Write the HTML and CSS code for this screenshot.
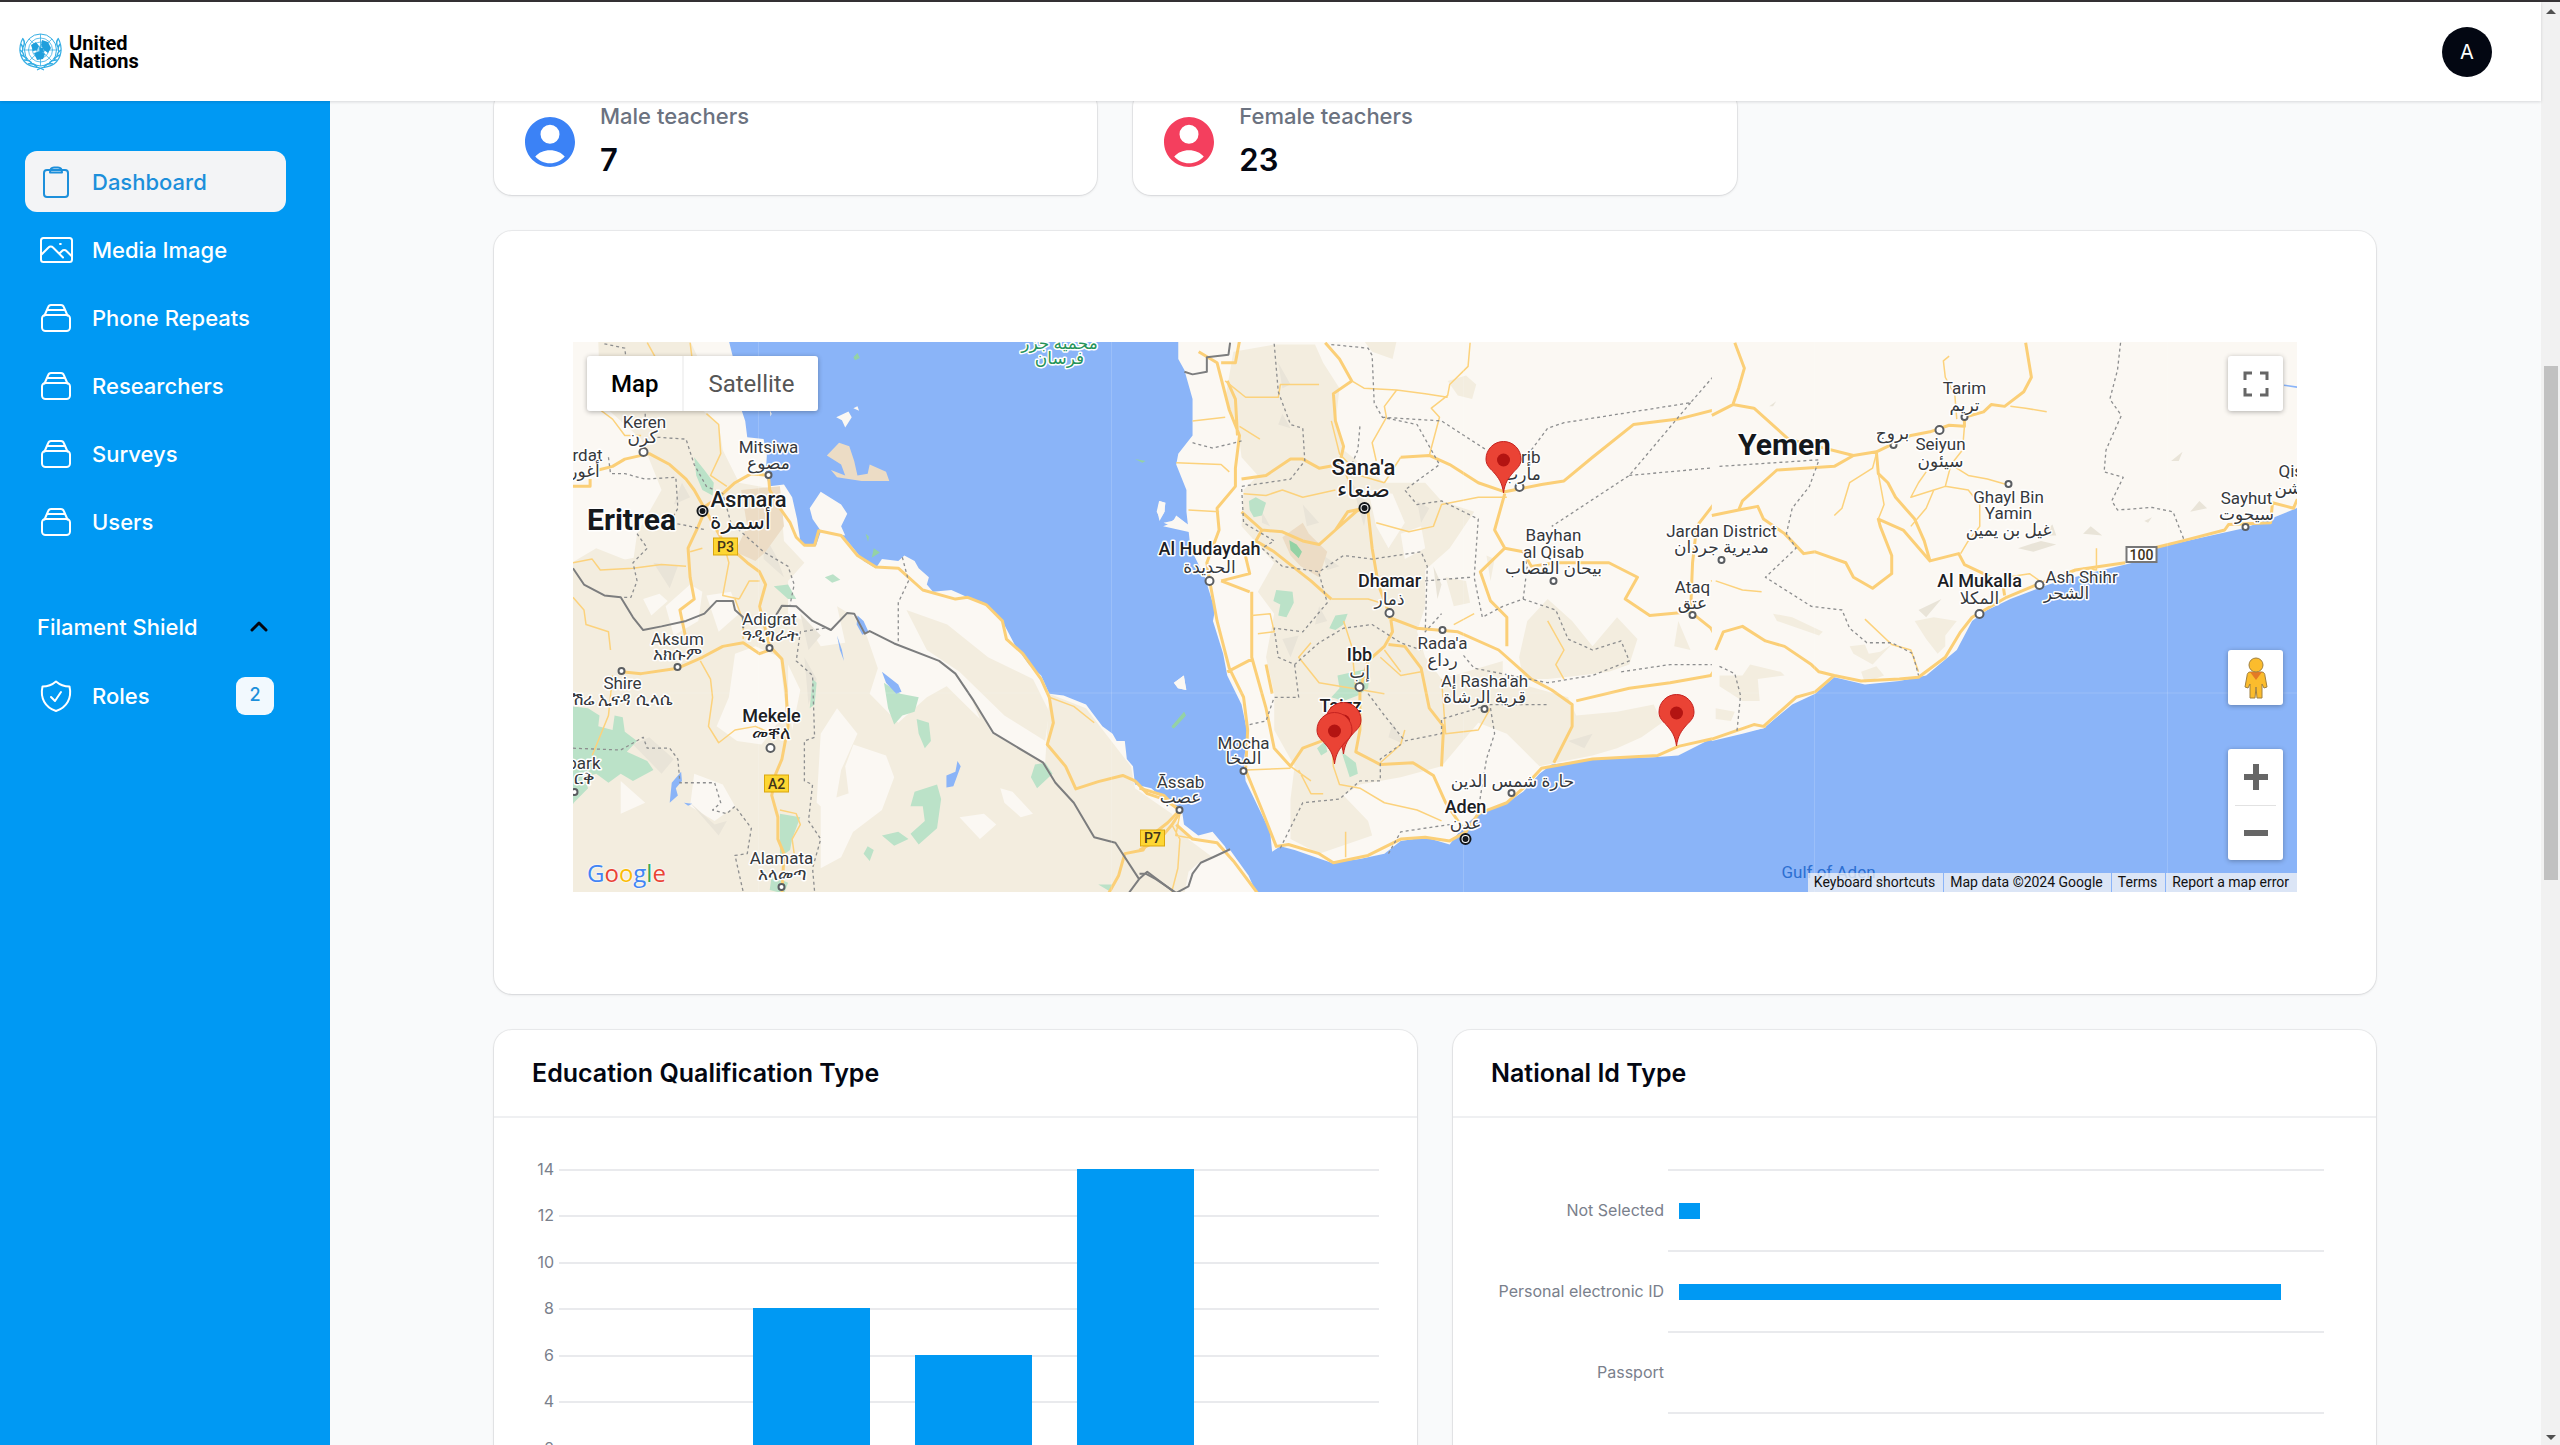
FILE: index.html
```html
<!DOCTYPE html>
<html lang="en">
<head>
<meta charset="utf-8">
<title>Dashboard</title>
<link rel="stylesheet" href="styles.css">
</head>
<body>
<div class="page">
  <div class="app">
    <header class="topbar">
      <a class="brand" href="#">
        <svg class="brand-mark" viewBox="0 0 45 38" aria-hidden="true">
          <g fill="none" stroke="#35aee4">
            <circle cx="22.500" cy="17" r="16" stroke-width="1"/>
            <circle cx="22.500" cy="17" r="12" stroke-width=".8"/>
            <circle cx="22.500" cy="17" r="8" stroke-width=".8"/>
            <circle cx="22.500" cy="17" r="4" stroke-width=".8"/>
            <path d="M22.500 1v32M6.500 17h32M11 6l23 22M34 6L11 28" stroke-width=".8"/>
            <path d="M5 5C0 14 1 25 9 31c4 3 9 3 13 4l4 2M40 5c5 9 4 20-4 26-4 3-9 3-13 4l-4 2" stroke-width="1.200"/>
            <path d="M5 6c2 3 2 5 0 8M3 11c2 3 3 5 1 8M2 17c3 2 4 4 4 7M3 22c3 1 6 3 6 6M6 27c4 0 7 1 8 4M10 31c4-1 7 0 9 3M40 6c-2 3-2 5 0 8M42 11c-2 3-3 5-1 8M43 17c-3 2-4 4-4 7M42 22c-3 1-6 3-6 6M39 27c-4 0-7 1-8 4M35 31c-4-1-7 0-9 3" stroke-width="1.500"/>
          </g>
          <path d="M13 12l5-3 3 4-2 4-4 1zM24 7l6 2 3 6-3 5-4-3-3-5zM16 20l6-2 5 3-2 5-6 1zM21 14l4 1 1 4-4 1z" fill="#1f9fdc"/>
        </svg>
        <span class="brand-name">United<br>Nations</span>
      </a>
      <button class="avatar" type="button" aria-label="User menu">A</button>
    </header>
    <div class="body">
      <nav class="sidebar">
        <ul class="nav">
          <li><a class="nav-item active" href="#"><svg class="icon" viewBox="0 0 36 36"><rect x="6" y="6" width="24" height="27" rx="3"/><path d="M12 8.500C12 5 14 3.500 16 3.500h4c2 0 4 1.500 4 5z"/></svg>Dashboard</a></li>
          <li><a class="nav-item" href="#"><svg class="icon" viewBox="0 0 36 36"><rect x="3" y="6" width="31" height="24" rx="2.500"/><path d="M3 23l7.500-7.500a3 3 0 0 1 4.500 0l10 10M22 21l2-2a3 3 0 0 1 4.500 0l5.500 5.500M22 12h.8"/></svg>Media Image</a></li>
          <li><a class="nav-item" href="#"><svg class="icon" viewBox="0 0 36 36"><rect x="4" y="15" width="28" height="16" rx="3.500"/><path d="M6.500 15.500l3.500-8C10.500 6 11.500 5 13 5h10c1.500 0 2.500 1 3 2.500l3.500 8M9 10h18"/></svg>Phone Repeats</a></li>
          <li><a class="nav-item" href="#"><svg class="icon" viewBox="0 0 36 36"><rect x="4" y="15" width="28" height="16" rx="3.500"/><path d="M6.500 15.500l3.500-8C10.500 6 11.500 5 13 5h10c1.500 0 2.500 1 3 2.500l3.500 8M9 10h18"/></svg>Researchers</a></li>
          <li><a class="nav-item" href="#"><svg class="icon" viewBox="0 0 36 36"><rect x="4" y="15" width="28" height="16" rx="3.500"/><path d="M6.500 15.500l3.500-8C10.500 6 11.500 5 13 5h10c1.500 0 2.500 1 3 2.500l3.500 8M9 10h18"/></svg>Surveys</a></li>
          <li><a class="nav-item" href="#"><svg class="icon" viewBox="0 0 36 36"><rect x="4" y="15" width="28" height="16" rx="3.500"/><path d="M6.500 15.500l3.500-8C10.500 6 11.500 5 13 5h10c1.500 0 2.500 1 3 2.500l3.500 8M9 10h18"/></svg>Users</a></li>
        </ul>
        <button class="nav-group" type="button">Filament Shield
          <svg class="chevron" viewBox="0 0 18 12"><path d="M2 9l7-7 7 7"/></svg>
        </button>
        <ul class="nav">
          <li><a class="nav-item" href="#"><svg class="icon" viewBox="0 0 36 36"><path d="M18 3.500C14 7 9.500 8.500 4.500 8.500 2 20 7 29.500 18 33c11-3.500 16-13 13.500-24.500-5 0-9.500-1.500-13.500-5zM13 19l4 4 6-9"/></svg>Roles<span class="badge">2</span></a></li>
        </ul>
      </nav>

      <main class="content">
        <section class="stats">
          <article class="card stat">
            <svg class="person male" viewBox="2 2 20 20"><path d="M12 2C6.500 2 2 6.500 2 12s4.500 10 10 10 10-4.500 10-10S17.500 2 12 2zm0 3.100a3.800 3.800 0 1 1 0 7.600 3.800 3.800 0 0 1 0-7.600zm0 15.400c-2.300 0-4.500-1-5.900-2.700 1.300-1.500 3.500-2.500 5.900-2.500s4.600 1 5.900 2.500c-1.400 1.700-3.600 2.700-5.900 2.700z"/></svg>
            <div><p class="stat-label">Male teachers</p><p class="stat-value">7</p></div>
          </article>
          <article class="card stat">
            <svg class="person female" viewBox="2 2 20 20"><path d="M12 2C6.500 2 2 6.500 2 12s4.500 10 10 10 10-4.500 10-10S17.500 2 12 2zm0 3.100a3.800 3.800 0 1 1 0 7.600 3.800 3.800 0 0 1 0-7.600zm0 15.400c-2.300 0-4.500-1-5.900-2.700 1.300-1.500 3.500-2.500 5.900-2.500s4.600 1 5.900 2.500c-1.400 1.700-3.600 2.700-5.900 2.700z"/></svg>
            <div><p class="stat-label">Female teachers</p><p class="stat-value">23</p></div>
          </article>
        </section>

        <section class="card map-card">
          <div class="map">
            <svg class="map-canvas" viewBox="0 0 1725 550" preserveAspectRatio="xMidYMid slice" role="img" aria-label="Map of Yemen and Eritrea">
              <rect width="1725" height="550" fill="#8ab4f8"/>
              <!-- Eritrea and Ethiopia -->
              <g class="tile" transform="translate(-13 -12) scale(.40816 .36364)">
                <path class="land" d="M30 30H415L425 75 440 200 455 250 460 295 500 300 508 345 505 400 515 430 550 425 570 460 582 520 590 580 605 595 628 595 640 555 690 560 720 600 745 635 775 655 790 630 830 635 845 620 870 635 880 655 905 680 900 700 915 720 960 715 1000 735 1040 750 1085 800 1115 865 1150 920 1180 950 1200 1000 1235 1005 1290 1030 1330 1090 1355 1110 1365 1130 1385 1130 1390 1180 1405 1200 1410 1250 1450 1260 1480 1290 1525 1320 1530 1360 1565 1390 1600 1380 1630 1420 1690 1550H30z"/>
                <path class="hill" d="M95 30H320L345 90 350 220 390 260 400 330 440 420 540 440 550 580 600 640 560 690 560 780 600 800 640 870 700 860 680 760 740 800 780 930 760 1000 830 1080 900 1010 980 960 1030 1050 1060 1110 1190 1190 1200 1000 1290 1040 1400 1200 1410 1260 1500 1330 1540 1400 1600 1450 1650 1550H30V640L90 600 180 640 190 560 250 440 200 300 100 200z"/>
                <path class="land" d="M40 60l30-10-10 90-20 50zM260 760l60-60 30 20-10 80-60 40zM205 740l40-15 20 20-40 40zM360 730l60-10 20 60-50 50zM430 890l50-20 60 30 15 150-60 90-60-10-50-40 30-80zM640 1110l40-70 50 70-40 100-20 130-40-40zM560 920l30 70-20 110-10-80zM810 760l100 20 60 130 60 160-90-100-90-60zM700 1200l20-60 80 30 20 60-30 90-70 60zM980 1340l60-10 30 30-40 40zM1080 1260l30 10 50 60-30 10-40-40zM640 1300l80-30 20 60-50 120-50 30zM150 1240l60 60-60 30zM330 1220l70 30 30 60-50 40-60-40z"/>
                <path class="hill" d="M850 770l100 40 100 90 110 60 40 90-10 80-100-70-110-120-80-60zM120 640l90-20 20 90-80 10z"/>
                <path class="shade" d="M100 100l30 60-20 20zM280 120l20 80-30-20zM230 640l60 10-20 60zM500 560l30 60 20 60-50-50zM590 780l50 60-30 40zM600 900l30 60-20 70zM180 1140l40-20 60 60-30 40zM320 1300l60 60 30-10-20 40zM300 420l20 40-40 20z"/>
                <path class="sand" d="M445 440L540 430 550 540 505 610 480 635 430 610 460 540zM655 345L685 310 710 320 722 360 730 400 755 395 760 370 800 390 808 415 740 415 680 405 665 385 700 400 690 370z"/>
                <path class="park" d="M330 350L355 385 378 420 375 455 350 440 335 400zM30 1035L70 1040 98 1060 95 1090 130 1100 135 1060 155 1065 160 1105 190 1130 165 1160 215 1185 230 1210 180 1240 150 1220 120 1245 90 1220 60 1230 70 1260 35 1300 30 1310zM525 705L560 700 580 740 560 740zM795 970L835 1000 880 1010 870 1050 840 1060 820 1085 805 1040zM875 1070L905 1080 910 1130 895 1150 880 1110zM870 1270L925 1250 935 1290 925 1370 880 1415 860 1385 895 1350 890 1310 860 1310zM790 1390L830 1380 855 1400 820 1418zM745 1440L755 1420 770 1430 760 1460zM620 960l10 10-5 60 -12 10zM1155 1230L1165 1195 1190 1190 1208 1220 1170 1260zM540 1330L590 1340 570 1400 565 1430 540 1450zM520 1500L560 1520 550 1550 515 1540zM1320 1525l40 0-10 20zM650 680l20-8 18 15-20 8z"/>
                <path class="green" d="M720 75l10-12 6 14-12 6zM750 560l8 8-2 14zM770 600l15 12-20 14zM1410 355l26 5-8 5zM1500 1090L1530 1050 1535 1060 1505 1095z"/>
                <path class="land" d="M613 490L640 445 690 480 705 505 690 540 700 565 640 552 620 520zM678 240l30-16 8 16-16 28-8-20zM720 215l10-5 4 12zM1465 500L1470 470 1485 475 1480 505 1470 525zM1480 530L1500 525 1515 515 1545 540 1560 555 1500 540zM1505 970L1530 950 1535 990 1515 985zM515 220l5 10-3 8z"/>
                <path class="water" d="M730 785L745 800 757 830 742 838 728 810zM680 840l12 40 5 30-10-30zM790 940L830 975 838 995 825 1000 800 970zM948 1225L970 1215 975 1185 983 1200 965 1255 948 1258zM275 1245L298 1215 300 1240 285 1260 290 1280 270 1300zM305 1300l20 3-10 5z"/>
                <path class="road wide" d="M95 385L130 375 160 355 220 340 270 370 310 410 330 440 360 500 400 580 460 640 490 665 505 700 490 760 515 870 545 905 555 990 560 1090 545 1180 530 1220 520 1280 535 1340 535 1400 550 1440 545 1550M355 500L340 540 315 600 320 680 330 740 295 770 310 850M350 490L390 460 430 420 470 395 512 400 515 440 540 490 565 530 580 570 600 592 625 592 635 552 690 565 730 620 775 652 830 655 890 715 970 740 1000 735 1045 755 1085 800 1095 850 1135 890 1180 960 1200 1010 1210 1080 1195 1140 1240 1200 1265 1262 1320 1242 1380 1225 1410 1240 1440 1275 1480 1290 1520 1320 1490 1355 1450 1390 1430 1430 1385 1440 1370 1500 1345 1550M33 430L75 430 75 410"/>
                <path class="road wide" d="M152 940L200 945 290 930 350 900 400 870 450 860 490 890 515 880"/>
                <path class="road" d="M215 35L235 75M320 35L325 80M100 220L130 245 160 290 200 290M360 230L390 260 395 340 370 400 410 430M33 640L80 630 100 660 180 655 250 645 310 650M33 735L60 770 65 810 120 830 125 880M350 600L320 610M400 580L415 640 400 730 440 740M440 740L465 690 490 690M430 740L450 800 450 850M345 910L370 960 375 1010 365 1090 390 1135 430 1100 480 1090 520 1110M130 950L120 1060 80 1170M540 1320L580 1330 590 1360 570 1400 575 1440M1200 1010L1260 1035 1310 1080M1500 1360L1520 1400 1515 1480 1500 1545M1520 1330L1510 1390 1560 1400"/>
                <path class="border" d="M33 655L60 700 110 730 150 735 180 790 205 825 250 815 310 800 355 780 385 745 425 745 430 770 450 790 450 820M530 785L545 758 580 760 620 800 665 825 705 778 722 780 748 835 760 828 820 862 930 910 970 945 1015 1020 1063 1108 1185 1190 1215 1245 1260 1300 1310 1395 1362 1410 1420 1510 1440 1490 1505 1545M1395 1548L1420 1510"/>
                <path class="dash" d="M110 38L160 50 165 100M210 230V260M240 295L310 300 330 370 360 430 400 450 420 530 460 570 500 610 560 650 575 700 565 755M120 350L125 395 160 395 210 410 285 405 290 490 270 530 300 535 360 550M190 560L215 600 180 640 190 690 175 735 150 735M840 625L855 690 830 750 830 860M650 820L590 830 580 910 620 950 625 1120 600 1130 600 1240 620 1250 610 1350 640 1400 620 1480 625 1545M33 1150L150 1155 205 1120 215 1150 270 1150 290 1180 295 1245 380 1245 395 1300 375 1320 410 1330 430 1310 470 1370 460 1440 430 1445 450 1545"/>
              </g>
              <!-- Yemen west -->
              <g class="tile" transform="translate(567 -12) scale(.40816 .36364)">
                <path class="land" d="M95 30H1570V1055L1530 1095 1480 1105 1390 1130 1320 1170 1260 1175 1120 1180 1010 1195 980 1220 940 1270 900 1300 830 1330 790 1370 760 1415 700 1395 640 1405 600 1440 540 1455 470 1465 380 1430 345 1420 325 1435 320 1380 260 1240 255 1190 265 1110 250 1030 215 950 205 890 180 800 185 770 160 680 125 600 115 500 115 440 90 370 95 340 130 290 130 190 110 110 95 80z"/>
                <path class="hill" d="M230 60L330 40H430L450 90 490 160 480 260 500 330 600 420 700 420 740 470 820 500 760 600 700 660 700 760 680 830 700 900 740 960 830 930 890 910 890 960 1050 1010 1070 1060 1170 1050 1260 1030 1280 1080 1230 1120 1170 1150 1110 1170 1020 1190 980 1200 900 1110 830 1080 740 1200 640 1230 540 1250 500 1280 560 1350 570 1390 440 1440 370 1400 370 1290 380 1200 330 1100 330 1000 310 900 330 780 290 720 330 640 250 540 255 440 290 400 250 350 240 260 210 190z"/>
                <path class="hill" d="M550 30H630L620 80 570 60zM755 140L800 125 825 150 815 190 780 180zM1000 740L1060 800 1110 870 1170 790 1220 850 1200 920 1150 940 1080 950 1000 960 940 960 930 900 950 800zM1320 800L1350 880 1310 870zM850 620l20 10-10 60zM750 680l50 10 10 60-40 10z"/>
                <path class="shade" d="M340 90l30 60-20 10zM350 230l20 40-30-10zM300 500l20 40-20-10zM400 480l40 50-30 10zM450 620l40 30-30 10zM350 850l40-10-20 60zM440 760l20 40-30 10zM680 470l30 20-20 40zM620 1080l30 60-40-20zM520 420l40 60-10 60zM720 650l20 50-10 40zM1050 1130l60-20-20 40z"/>
                <path class="land" d="M560 440l60 10 30 80-40 70-30-60zM640 560l50-20 10 60-50 30zM700 800l60 60-50 60z"/>
                <path class="sand" d="M350 570L400 530 415 560 460 610 440 680 395 650 370 620z"/>
                <path class="park" d="M268 470L285 460 310 475 300 510 280 515 270 495zM335 715L375 720 378 750 360 790 340 785 345 755 328 745zM465 820L480 785 510 780 500 810 480 825zM485 950L565 930 560 985 535 1005 500 1020 470 1010 490 985zM435 1150L455 1130 460 1160 445 1170zM495 1160L530 1190 535 1220 515 1230z"/>
                <path class="green" d="M367 578L385 590 398 610 390 628 370 605zM78 1092L110 1052 112 1062 84 1096z"/>
                <path class="land" d="M42 500L48 470 62 475 62 500 50 518zM58 540L80 530 90 510 130 545 132 558 80 545zM85 970L108 950 115 990 95 985z"/>
                <path class="land" d="M150 1460l72-30 45 70 20 50H110l10-60z"/>
                <path class="road wide" d="M145 60L190 90 220 220 245 290 235 380 235 430 190 490 195 550 165 640 172 690 190 800 220 930 255 1010 265 1100 260 1210 300 1320 335 1420 365 1415 440 1440 475 1465 560 1445 640 1400 700 1395 760 1405 800 1380 830 1330 900 1300 940 1260 985 1205 1110 1180 1270 1170 1320 1145 1420 1120 1490 1090 1535 1090M455 35L490 80 520 140 475 175 480 250 500 320 490 370 440 380 400 355 370 355 310 400 250 410M240 290L235 190 215 140M245 30L235 90 200 90M550 490L510 500 480 550 440 590 400 580 350 555 300 550 285 580 330 610 420 690 470 740M300 550L250 500M560 500L570 600 585 700 615 790 620 830 600 870 560 910 540 990 540 1100 530 1160 590 1195 670 1190 720 1225 750 1300 780 1350 800 1380M480 550L530 500 560 480M610 790L680 820 780 830 880 880 960 960 1010 990 1060 1030 1060 1090 1015 1190M640 350L710 345 760 370 830 420 895 445 985 425 1040 415 1110 350 1210 260 1320 245 1460 205 1570 285M895 450L870 550 895 600 835 665 860 745 900 790 900 870M895 600L940 610 960 650 1020 640 1150 640 1220 680 1190 740 1250 785 1350 775 1400 820 1420 860 1430 900 1400 950 1300 970 1200 985 1070 1020M1350 780L1355 640 1365 540 1410 475 1430 510 1480 490 1530 500 1570 560M1480 490L1500 440 1570 385M1460 30L1480 105 1460 205M1420 850L1470 815 1530 860 1570 855M610 865L650 870 690 930 710 1040 745 1090 740 1200M275 720L275 900 310 1040 330 1150 370 1200 400 1150 470 1120M200 690L270 720M200 690L270 670 255 600M215 940L275 905M310 920L325 1000"/>
                <path class="road" d="M810 35L805 100 760 150 755 180 715 215 735 240 710 345M520 140L550 160 630 165 700 175 755 185M630 165L600 210 605 240 570 310 580 360M210 140L260 185 340 185 345 150 440 150M130 250L210 240M245 265L295 300M90 365L200 370 220 390M255 450L310 455 350 440 400 460 480 440M120 495L195 500M275 785L320 780 330 830 290 835M470 740L560 740 590 750M500 800L520 870 530 990M420 860L390 900 440 970 600 1000M590 900L640 950 690 940M600 880L640 940M740 960L750 1110 830 1100 860 1040M470 1120L475 1200 490 1250 540 1260 600 1300 680 1320 740 1350M390 1210L420 1275 450 1275M370 1200L420 1240M260 1210L370 1205M505 1380V1450M590 1190L640 1140 650 1100M900 460L830 460 740 480 720 540 660 555 580 530M1400 690L1430 685 1470 710 1520 715M1000 800L1040 880 1020 920 1040 960M820 780L770 810M470 250L490 340 540 400 600 420M600 420L640 350M500 380L520 440"/>
                <path class="road wide" d="M0 1260L60 1280 100 1325 80 1360 50 1400 0 1430M90 1360L130 1400 190 1410 230 1460 290 1550"/>
                <path class="border" d="M110 115L130 122 165 115 165 75 218 68 222 35M0 1495L15 1495 40 1510 90 1548 120 1530 130 1495 150 1465 180 1450 222 1428"/>
                <path class="dash" d="M330 38L340 170 370 260 400 270 405 360 370 410 250 430 255 530 330 580 300 600 350 650 440 665 500 620 570 630 690 610 705 650 700 830 740 780M130 310L180 325 250 305M470 40L560 50 570 70 575 200 595 240 680 260 735 370 650 440 680 480 740 470 830 520 820 680 840 790 890 760 940 740 950 650 940 610M595 240L740 250 850 330M540 265L535 330 520 370M960 330L1000 270 1040 255 1350 200 1408 125V35M1350 200L1200 400 1010 540M1200 400L1570 362M700 690L810 680M440 670L460 750 400 830 330 820 340 900 380 920 440 860 500 820 570 810 640 860 690 880M380 920L390 1010 330 1010M270 1085L310 1075 330 1010M560 1000L600 1060 650 1130 740 1110 740 1070 860 1030 1000 1030M345 1425L400 1300 490 1290 540 1240 590 1240 590 1180 640 1140M610 1440L640 1380 760 1360M860 1040L870 1110 850 1180 830 1320M940 740L1020 770 1050 850 1110 880 1180 855 1200 910 1110 950 1000 970 820 930 790 890M1180 940L1300 920 1420 920 1470 980 1465 1110M1570 690L1540 680 1570 640"/>
              </g>
              <!-- Yemen east -->
              <g class="tile" transform="translate(1147 -12) scale(.38270 .36364)">
                <path class="land" d="M-20 30H1520V485L1450 515 1370 545 1220 580 1140 600 1080 640 960 670 860 700 760 740 700 770 660 800 620 880 580 915 540 950 470 965 380 975 300 955 250 1000 190 1030 115 1095 60 1110-20 1130z"/>
                <path class="hill" d="M510 800L560 790 620 800 590 840 590 870 570 890 540 850zM140 780L190 790 270 830 260 840 150 800zM340 870L380 865 390 890 420 885 450 865 400 920 350 890zM370 940L410 925 430 950 380 970zM80 920L160 940 170 950 100 960 105 1020 60 1020 0 980 0 950 60 950zM-10 1040L40 1050 30 1075-10 1070z"/>
                <path class="shade" d="M1180 360l30-25-10 25zM780 600l60-20 40 10-60 20zM840 565l30-30 10 30zM1110 525l20-10-10 15zM520 770l60-30-40 50zM130 210l18-14-8 14zM1230 500l24-30 20 20zM950 560l20-20 30 25z"/>
                <path class="road wide" d="M40 35L65 105 50 160 35 205 -20 235M35 205L90 215 180 300 350 345 410 335 460 310 500 290 550 280 600 262 640 265 640 240 690 225 710 205 745 210 795 170 815 130 800 35M350 345L300 375 150 385 60 470 50 495-20 510M50 495L100 485 115 520 170 560 220 615 250 610 330 640 350 680 400 710 450 670 450 620 420 540 415 520 480 550 550 635 625 615 640 645 740 695 745 730M410 335L415 395 440 420 460 460 510 520 535 580 550 635M-10 880L10 830 60 815 120 855 170 870 240 920 260 940 300 950 370 965 470 960 520 955 590 900 630 830 660 790 750 735 830 700 930 660 1060 640M300 950L250 995 200 1010 115 1090 90 1085-20 1125M1140 598L1210 580 1320 550 1330 535 1440 530 1445 475 1500 490 1510 465"/>
                <path class="road" d="M600 72L585 85 590 130 615 180 620 245M760 210L800 215 855 225M640 265L635 330 605 370 650 400 700 410 750 425M605 370L590 430 650 440 680 480 680 540 650 580 630 615M590 430L560 440 540 490 500 540M560 440L500 460 520 420 540 390M410 340L400 380 340 420 320 490 300 510M415 395L430 480 415 520M380 795L450 865 500 880 520 940M985 600V660L950 655M750 680L810 670 850 700M-10 690L60 715 110 720"/>
                <path class="dash" d="M1048 35L1040 110 1020 190 1050 235 1010 330 1005 390 1055 405 1025 470 1040 495 1130 488 1185 500 1215 580M0 375L260 357 235 430 190 490 175 560 200 600 120 680 180 720 240 760 320 770 340 820 385 860 450 860 505 890 520 950M0 925L40 945 55 1005 45 1110"/>
                <path d="M1475 152L1515 158" fill="none" stroke="#8ab4f8" stroke-width="1.500"/>
              </g>
              <path d="M186 0V550M539 0V550M891 0V550M1242 0V550M1595 0V550M0 351H1725" stroke="#fff" stroke-opacity=".15"/>
              <g class="town">
                <circle cx="71" cy="110" r="4"/><circle cx="196" cy="133" r="3"/><circle cx="197" cy="306" r="3"/><circle cx="105" cy="325" r="3"/><circle cx="49" cy="329" r="3"/><circle cx="198" cy="406" r="4"/><circle cx="2" cy="450" r="3"/><circle cx="209" cy="545" r="3"/><circle cx="607" cy="468" r="3"/><circle cx="637" cy="239" r="4"/><circle cx="947" cy="145" r="4"/><circle cx="981" cy="239" r="3"/><circle cx="1149" cy="218" r="3"/><circle cx="1120" cy="273" r="3"/><circle cx="817" cy="271" r="4"/><circle cx="787" cy="345" r="4"/><circle cx="870" cy="288" r="3"/><circle cx="912" cy="367" r="3"/><circle cx="671" cy="429" r="3"/><circle cx="939" cy="451" r="3"/><circle cx="1392" cy="75" r="3"/><circle cx="1321" cy="103" r="3"/><circle cx="1367" cy="88" r="4"/><circle cx="1436" cy="142" r="3"/><circle cx="1673" cy="185" r="3"/><circle cx="1407" cy="272" r="4"/><circle cx="1467" cy="243" r="4"/>
              </g>
              <g class="capital"><circle cx="130" cy="169" r="5"/><circle cx="792" cy="166" r="5"/><circle cx="893" cy="497" r="5"/></g>
              <g fill="#14181c"><circle cx="130" cy="169" r="3"/><circle cx="792" cy="166" r="3"/><circle cx="893" cy="497" r="3"/></g>
              <g class="shield"><rect x="141" y="196" width="24" height="17"/><rect x="192" y="433" width="24" height="17"/><rect x="568" y="488" width="24" height="16"/></g>
              <rect x="1554" y="205" width="30" height="15" fill="#fff" stroke="#777" stroke-width="2"/>
              <g class="shield-text"><text x="153" y="210">P3</text><text x="204" y="447">A2</text><text x="580" y="501">P7</text><text x="1569" y="218">100</text></g>

              <g class="label">
                <text class="reserve" x="487" y="7">محمية جزر</text><text class="reserve" x="487" y="22">فرسان</text>
                <text x="72" y="86">Keren</text><text x="70" y="101">كرن</text>
                <text class="start" x="0" y="119">rdat</text><text x="12" y="135">أغور</text>
                <text x="196" y="111">Mitsiwa</text><text x="196" y="127">مصوع</text>
                <text class="capital-name start" x="138" y="165">Asmara</text><text class="capital-name local" x="168" y="187">أسمرة</text>
                <text x="197" y="283">Adigrat</text><text x="197" y="299">ዓዲግራት</text>
                <text x="105" y="303">Aksum</text><text x="105" y="318">አክሱም</text>
                <text x="50" y="347">Shire</text><text x="50" y="363">ሽሬ ኢናዳ ሲላሴ</text>
                <text class="city" x="199" y="380">Mekele</text><text class="city" x="199" y="397">መቐለ</text>
                <text class="end" x="28" y="427">park</text><text class="end" x="21" y="442">ርቅ</text>
                <text x="209" y="522">Alamata</text><text x="209" y="538">አላመጣ</text>
                <text x="608" y="446">Āssab</text><text x="608" y="461">عصب</text>
                <text class="city" x="637" y="213">Al Hudaydah</text><text x="637" y="231">الحديدة</text>
                <text class="capital-name" x="791" y="133">Sana'a</text><text class="capital-name local" x="791" y="155">صنعاء</text>
                <text class="end" x="968" y="121">Marib</text><text x="949" y="138">مأرب</text>
                <text x="981" y="199">Bayhan</text><text x="981" y="216">al Qisab</text><text x="981" y="232">بيحان القصاب</text>
                <text x="1149" y="195">Jardan District</text><text x="1149" y="211">مديرية جردان</text>
                <text x="1120" y="251">Ataq</text><text x="1120" y="267">عتق</text>
                <text class="city" x="817" y="245">Dhamar</text><text x="817" y="263">ذمار</text>
                <text class="city" x="787" y="319">Ibb</text><text x="787" y="336">إب</text>
                <text x="870" y="307">Rada'a</text><text x="870" y="324">رداع</text>
                <text x="912" y="345">Al Rasha'ah</text><text x="912" y="361">قرية الرشأة</text>
                <text class="city" x="768" y="370">Taizz</text>
                <text x="671" y="407">Mocha</text><text x="671" y="422">المخا</text>
                <text x="940" y="445">حارة شمس الدين</text>
                <text class="city" x="893" y="471">Aden</text><text x="893" y="487">عدن</text>
                <text x="1392" y="52">Tarim</text><text x="1392" y="69">تريم</text>
                <text x="1320" y="97">بروج</text>
                <text x="1368" y="108">Seiyun</text><text x="1368" y="125">سيئون</text>
                <text x="1436" y="161">Ghayl Bin</text><text x="1436" y="177">Yamin</text><text x="1436" y="194">غيل بن يمين</text>
                <text class="start" x="1706" y="135">Qishn</text><text x="1720" y="152">قشن</text>
                <text x="1674" y="162">Sayhut</text><text x="1674" y="178">سيحوت</text>
                <text class="city" x="1407" y="245">Al Mukalla</text><text x="1407" y="262">المكلا</text>
                <text class="start" x="1473" y="241">Ash Shihr</text><text x="1494" y="257">الشحر</text>
                <text class="country" x="59" y="188">Eritrea</text><text class="country" x="1212" y="113">Yemen</text>
                <text class="sea" x="1256" y="536">Gulf of Aden</text>
              </g>
              <defs><g id="pin"><path d="M0 0C-1.500-11-5-15-10-21-14-25-17.500-28-17.500-34a17.500 17.500 0 0 1 35 0C17.500-28 14-25 10-21 5-15 1.500-11 0 0z" fill="#ea4335" stroke="#c5221f"/><circle cy="-33" r="6.500" fill="#b31412"/></g></defs>
              <use href="#pin" x="931" y="151"/><use href="#pin" x="771" y="412"/><use href="#pin" x="762" y="422"/><use href="#pin" x="1104" y="404"/>
            </svg>
            <div class="map-type"><button type="button" class="selected">Map</button><button type="button">Satellite</button></div>
            <div class="map-tools">
              <button type="button" class="tool" aria-label="Toggle fullscreen view"><svg viewBox="0 0 26 26" width="26" height="26"><path d="M2 9V2h7M17 2h7v7M24 17v7h-7M9 24H2v-7" fill="none" stroke="#666" stroke-width="3"/></svg></button>
              <button type="button" class="tool pegman" aria-label="Street View"><svg viewBox="0 0 24 42" width="24" height="42"><path d="M6 15h12c2 0 3 2 3 4l2 11-3 1-2-4v14h-5l-1-11-1 11H6V27l-2 4-3-1 2-11c0-2 1-4 3-4z" fill="#fbbc2d" stroke="#a08040"/><path d="M6 15h12l-6 8z" fill="#e37a26"/><circle cx="12" cy="8" r="7" fill="#fbbc2d" stroke="#a08040"/></svg></button>
              <div class="zoom">
                <button type="button" aria-label="Zoom in"><svg viewBox="0 0 24 26" width="24" height="26"><path d="M0 13h24M12 0v26" stroke="#666" stroke-width="6"/></svg></button>
                <button type="button" aria-label="Zoom out"><svg viewBox="0 0 24 26" width="24" height="26"><path d="M0 13h24" stroke="#666" stroke-width="6"/></svg></button>
              </div>
            </div>
            <a class="google" href="#" aria-label="Google"><span class="g-blue">G</span><span class="g-red">o</span><span class="g-yellow">o</span><span class="g-blue">g</span><span class="g-green">l</span><span class="g-red">e</span></a>
            <div class="credits"><button type="button">Keyboard shortcuts</button><span>Map data ©2024 Google</span><a href="#">Terms</a><a href="#">Report a map error</a></div>
          </div>
        </section>

        <section class="charts">
          <article class="card">
            <h2 class="card-title">Education Qualification Type</h2>
            <div class="column-chart">
              <ol class="ticks"><li>14</li><li>12</li><li>10</li><li>8</li><li>6</li><li>4</li><li>2</li></ol>
              <div class="grid-lines"><i></i><i></i><i></i><i></i><i></i><i></i><i></i></div>
              <div class="columns"><b style="height:0%"></b><b style="height:57.140%"></b><b style="height:42.860%"></b><b style="height:100%"></b><b style="height:0%"></b></div>
            </div>
          </article>
          <article class="card">
            <h2 class="card-title">National Id Type</h2>
            <div class="bar-chart">
              <div class="bar-row"><span>Not Selected</span><div class="track"><b style="width:3.330%"></b></div></div>
              <div class="bar-row"><span>Personal electronic ID</span><div class="track"><b style="width:93.330%"></b></div></div>
              <div class="bar-row"><span>Passport</span><div class="track"></div></div>
              <div class="bar-row"><span></span><div class="track"></div></div>
            </div>
          </article>
        </section>
      </main>
    </div>
  </div>
  <div class="scrollbar" aria-hidden="true"><i class="arrow up"></i><i class="thumb"></i><i class="arrow down"></i></div>
</div>
</body>
</html>
```
FILE: styles.css
```css
* { box-sizing: border-box; }
body { margin: 0; font-family: Inter, "Noto Sans", sans-serif; color: #030712; background: #f9fafb; overflow: hidden; }
ul, ol, p, h2 { margin: 0; padding: 0; list-style: none; }
button { font: inherit; color: inherit; border: 0; padding: 0; background: none; cursor: pointer; }
a { color: inherit; text-decoration: none; }

.page { display: flex; height: 100vh; border-top: 2px solid #353235; }
.app { flex: 1; min-width: 0; display: flex; flex-direction: column; }

.topbar { position: relative; z-index: 2; flex: none; height: 99px; padding: 0 49px 0 18px; display: flex; align-items: center; justify-content: space-between; background: #fff; box-shadow: 0 1px 3px rgba(3, 7, 18, .14); }
.brand { display: flex; align-items: center; gap: 6px; }
.brand-mark { width: 45px; height: 38px; }
.brand-name { font: bold 20px/18px Roboto, sans-serif; color: #000; }
.avatar { width: 50px; height: 50px; border-radius: 50%; background: #030712; color: #fff; font-size: 20px; }

.body { flex: 1; min-height: 0; display: flex; }
.sidebar { flex: none; width: 330px; padding: 50px 44px 0 25px; background: #0099f3; color: #fff; font-size: 22px; font-weight: 500; }
.nav { display: flex; flex-direction: column; gap: 7px; }
.nav-item { display: flex; align-items: center; height: 61px; padding: 0 12px 0 13px; gap: 18px; border-radius: 12px; }
.nav-item.active { background: #f3f4f6; color: #1c8fdb; }
.icon { flex: none; width: 36px; height: 36px; fill: none; stroke: currentColor; stroke-width: 2; stroke-linecap: round; stroke-linejoin: round; }
.badge { margin-left: auto; width: 38px; height: 38px; border-radius: 9px; background: #f2f9fe; color: #1c8fdb; font-size: 18px; line-height: 36px; text-align: center; }
.nav-group { display: flex; align-items: center; justify-content: space-between; width: 100%; height: 36px; margin: 57px 0 20px; padding: 0 18px 0 12px; }
.chevron { width: 18px; height: 12px; fill: none; stroke: #030712; stroke-width: 3; stroke-linecap: round; stroke-linejoin: round; }

.content { flex: 1; min-width: 0; padding: 0 165px 0 164px; overflow: hidden; }
.card { background: #fff; border-radius: 18px; box-shadow: 0 0 0 1px rgba(3, 7, 18, .06), 0 1px 3px rgba(3, 7, 18, .1); }
.stats { display: grid; grid-template-columns: repeat(3, 1fr); gap: 36px; margin-top: -12px; }
.stat { display: flex; align-items: center; gap: 25px; padding: 9px 31px; }
.person { width: 50px; height: 50px; }
.male { fill: #3b82f6; }
.female { fill: #f43f5e; }
.stat-label { font-size: 22px; line-height: 36px; font-weight: 500; color: #6b7280; }
.stat-value { font-size: 31px; line-height: 52px; font-weight: 600; }

.map-card { margin: 36px 0; padding: 111px 79px 102px 79px; }
.map { position: relative; height: 550px; overflow: hidden; font-family: Roboto, "DejaVu Sans", sans-serif; }
.map-canvas { display: block; width: 100%; height: 100%; }
.tile path { vector-effect: non-scaling-stroke; stroke-linejoin: round; }
.land { fill: #fbf8f3; }
.hill { fill: #f3eddf; }
.shade { fill: #e9e4d8; }
.sand { fill: #ecdcc5; }
.park { fill: #bbe2c8; }
.green { fill: #94d2a5; }
.water { fill: #8ab4f8; }
.road { fill: none; stroke: #fcd27c; stroke-width: 1.5; }
.road.wide { stroke: #fbcf77; stroke-width: 3; }
.border { fill: none; stroke: #7c7d7e; stroke-width: 2; }
.dash { fill: none; stroke: #8d8e8f; stroke-width: 1.3; stroke-dasharray: 3 3; }
.town { fill: #fff; stroke: #5a5d61; stroke-width: 2; }
.capital { fill: #fff; stroke: #14181c; stroke-width: 2; }
.shield { fill: #fdd633; stroke: #dba70e; }
.shield-text { font-size: 14px; font-weight: 500; text-anchor: middle; fill: #40341a; }
.label { font-size: 17px; text-anchor: middle; fill: #35383c; stroke: #fff; stroke-width: 3; stroke-linejoin: round; paint-order: stroke; }
.label .start { text-anchor: start; }
.label .end { text-anchor: end; }
.label .city { font-size: 18px; font-weight: 500; fill: #1c2024; }
.label .capital-name { font-size: 22px; font-weight: 500; fill: #1c2024; }
.label .local { font-weight: 400; }
.label .country { font-size: 30px; font-weight: 700; fill: #14181c; }
.label .reserve { fill: #25935a; }
.label .sea { fill: #2c6fd1; stroke: none; }

.map-type { position: absolute; left: 14px; top: 14px; display: flex; background: #fff; border-radius: 3px; box-shadow: 0 1px 5px rgba(0, 0, 0, .3); font-size: 24px; color: #565656; }
.map-type button { height: 55px; padding: 0 24px; }
.map-type .selected { color: #000; font-weight: 500; border-right: 2px solid #f3f3f3; }
.map-tools { position: absolute; right: 14px; top: 14px; width: 55px; display: flex; flex-direction: column; }
.tool, .zoom { background: #fff; border-radius: 3px; box-shadow: 0 1px 5px rgba(0, 0, 0, .3); }
.tool { height: 55px; display: grid; place-items: center; }
.pegman { margin: 239px 0 44px; }
.zoom { height: 111px; padding: 0 7px; display: grid; grid-template-rows: 1fr 1fr; }
.zoom button { display: grid; place-items: center; }
.zoom button + button { border-top: 1px solid #e2e2e2; }
.google { position: absolute; left: 14px; bottom: 2px; font: 500 24px/34px "Open Sans", sans-serif; text-shadow: 0 0 2px #fff, 0 0 2px #fff; }
.g-blue { color: #4285f4; }
.g-red { color: #ea4335; }
.g-yellow { color: #fbbc04; }
.g-green { color: #34a853; }
.credits { position: absolute; right: 0; bottom: 0; display: flex; gap: 1px; font-size: 14px; line-height: 19px; color: #111; }
.credits > * { padding: 0 8px 0 6px; background: rgba(245, 245, 245, .75); }

.charts { display: grid; grid-template-columns: 1fr 1fr; gap: 36px; }
.card-title { padding: 25px 38px 25px; border-bottom: 2px solid #eff0f2; font-size: 25px; line-height: 36px; font-weight: 600; }
.column-chart { display: grid; grid-template-columns: 22px 1fr; gap: 0 5px; height: 429px; padding: 51px 38px; font-size: 16px; color: #7a808c; }
.ticks, .grid-lines { display: grid; grid-template-rows: repeat(7, 1fr); height: 325px; }
.ticks { text-align: right; line-height: 20px; margin-top: -10px; }
.grid-lines { grid-area: 1 / 2; }
.grid-lines i { border-top: 2px solid #e9eaed; }
.columns { grid-area: 1 / 2; height: 325px; margin-left: 9px; display: grid; grid-template-columns: repeat(5, 1fr); align-items: end; justify-items: center; }
.columns b { width: 72%; background: #0099f3; }
.bar-chart { padding: 51px 52px 52px 38px; font-size: 16px; color: #7a808c; }
.bar-row { display: grid; grid-template-columns: 173px 1fr; gap: 4px; height: 81px; align-items: center; text-align: right; }
.track { height: 100%; border-top: 2px solid #e9eaed; padding-left: 11px; display: flex; align-items: center; }
.track b { height: 16px; background: #0099f3; }

.scrollbar { flex: none; width: 19px; background: #f1f1f1; display: grid; grid-template-rows: 364px 514px 1fr; justify-items: center; }
.thumb { width: 14px; background: #c1c1c1; }
.arrow { width: 0; border: 5px solid transparent; }
.up { align-self: start; border-top: 0; border-bottom-color: #505050; margin-top: 7px; }
.down { align-self: end; border-bottom: 0; border-top-color: #505050; margin-bottom: 5px; }
```
